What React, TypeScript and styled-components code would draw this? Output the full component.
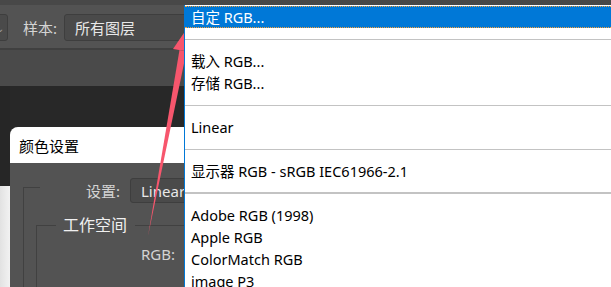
import React from 'react';
import styled, { createGlobalStyle } from 'styled-components';

const GlobalStyle = createGlobalStyle`
  html, body {
    margin: 0;
    padding: 0;
    background: #282828;
    overflow: hidden;
  }
  * {
    box-sizing: border-box;
  }
`;

const uiFont = `"Noto Sans", "Noto Sans CJK SC", sans-serif`;

const Page = styled.div`
  position: relative;
  width: 611px;
  height: 287px;
  overflow: hidden;
  display: flex;
  flex-direction: column;
  font-family: ${uiFont};
`;

const TopStrip = styled.div`
  height: 5px;
  flex-shrink: 0;
  background: #484848;
`;

const Toolbar = styled.div`
  height: 43px;
  flex-shrink: 0;
  background: #535353;
  display: flex;
  align-items: center;
  padding-top: 2px;
`;

const Select = styled.div<{ width: number }>`
  width: ${({ width }) => width}px;
  height: 27px;
  flex-shrink: 0;
  background: #4a4a4a;
  border: 1px solid #3e3e3e;
  border-radius: 3px;
  color: #e8e8e8;
  font-size: 15px;
  display: flex;
  align-items: center;
  padding-left: 10px;
  white-space: nowrap;
  overflow: hidden;
`;

const CutSelect = styled(Select)`
  margin-left: -${({ width }) => width - 8}px;
  justify-content: flex-end;
  padding: 0 3px 0 0;
  color: #9a9a9a;
  font-size: 10px;
`;

const ToolLabel = styled.span`
  color: #d4d4d4;
  font-size: 15px;
  margin: 0 7px 0 15px;
`;

const Divider = styled.div`
  height: 2px;
  flex-shrink: 0;
  background: #404040;
`;

const OptionsBar = styled.div`
  height: 36px;
  flex-shrink: 0;
  background: #4a4a4a;
`;

const Workspace = styled.div`
  flex: 1;
  min-height: 0;
  overflow: hidden;
  display: flex;
  background: #282828;
`;

const Backdrop = styled.div`
  width: 10px;
  flex-shrink: 0;
  display: flex;
  flex-direction: column;
`;

const BackdropPart = styled.div<{ light?: boolean }>`
  height: ${({ light }) => (light ? 'auto' : '100px')};
  flex: ${({ light }) => (light ? 1 : 'none')};
  background: ${({ light }) => (light ? 'linear-gradient(90deg, #e2e2e2, #f2f2f2)' : '#262626')};
`;

const Dialog = styled.div`
  flex: 1;
  margin-top: 41px;
  border-top-left-radius: 8px;
  overflow: hidden;
  background: #535353;
  display: flex;
  flex-direction: column;
`;

const TitleBar = styled.div`
  height: 36px;
  background: #ffffff;
  color: #000;
  font-size: 15px;
  display: flex;
  align-items: center;
  padding-left: 9px;
  flex-shrink: 0;
`;

const DialogBody = styled.div`
  padding: 8px 0 0 13px;
`;

const Group = styled.fieldset<{ inset?: number }>`
  margin: ${({ inset }) => (inset ? `12px 0 0 ${inset}px` : '0')};
  padding: 0;
  border: none;
  border-top: 1px solid #414141;
  border-left: 1px solid #414141;
  min-width: 0;
`;

const SettingsLegend = styled.legend`
  margin-left: 16px;
  padding: 7px 0 0 0;
`;

const GroupTitle = styled.legend`
  margin-left: 19px;
  padding: 0 8px 0 7px;
  color: #f0f0f0;
  font-size: 16px;
  line-height: 20px;
`;

const FieldRow = styled.div<{ labelWidth: number }>`
  display: grid;
  grid-template-columns: ${({ labelWidth }) => labelWidth}px 200px;
  column-gap: 10px;
  align-items: center;
  height: 25px;
  margin-top: ${({ labelWidth }) => (labelWidth < 100 ? 0 : 6)}px;
  & + & {
    margin-top: 12px;
  }
`;

const FieldLabel = styled.span`
  color: #d4d4d4;
  font-size: 15px;
  text-align: right;
  white-space: nowrap;
`;

const FieldSelect = styled(Select)`
  height: 25px;
  font-size: 15px;
`;

const Arrow = styled.svg`
  position: absolute;
  left: 0;
  top: 0;
  pointer-events: none;
`;

const Menu = styled.div`
  position: absolute;
  left: 184px;
  top: 5px;
  right: 0;
  bottom: 0;
  background: #ffffff;
  border-left: 1px solid #0078d7;
  padding-top: 1px;
  font-family: ${uiFont};
  font-size: 14.5px;
  color: #000;
`;

const MenuItem = styled.div<{ active?: boolean }>`
  height: 22px;
  line-height: 20px;
  padding-left: 6px;
  white-space: nowrap;
  background: ${({ active }) => (active ? '#0078d7' : 'transparent')};
  color: ${({ active }) => (active ? '#ffffff' : '#000000')};
  border-top: 1px dotted ${({ active }) => (active ? '#f5a03a' : 'transparent')};
  border-bottom: 1px dotted ${({ active }) => (active ? '#f5a03a' : 'transparent')};
`;

const Separator = styled.div<{ thick?: boolean }>`
  height: 22px;
  display: flex;
  flex-direction: column;
  justify-content: flex-start;
  padding-top: ${({ thick }) => (thick ? 10 : 11)}px;
  &::after {
    content: '';
    display: block;
    height: ${({ thick }) => (thick ? 2 : 1)}px;
    background: #c3c3c3;
  }
`;

type Entry = { label: string; active?: boolean } | { sep: true; thick?: boolean };

const entries: Entry[] = [
  { label: '自定 RGB...', active: true },
  { sep: true },
  { label: '载入 RGB...' },
  { label: '存储 RGB...' },
  { sep: true },
  { label: 'Linear' },
  { sep: true },
  { label: '显示器 RGB - sRGB IEC61966-2.1' },
  { sep: true, thick: true },
  { label: 'Adobe RGB (1998)' },
  { label: 'Apple RGB' },
  { label: 'ColorMatch RGB' },
  { label: 'image P3' },
];

const App: React.FC = () => {
  return (
    <Page>
      <GlobalStyle />
      <TopStrip />
      <Toolbar>
        <CutSelect width={40}>⌄</CutSelect>
        <ToolLabel>样本:</ToolLabel>
        <Select width={150}>所有图层</Select>
      </Toolbar>
      <Divider />
      <OptionsBar />
      <Workspace>
        <Backdrop>
          <BackdropPart />
          <BackdropPart light />
        </Backdrop>
        <Dialog>
          <TitleBar>颜色设置</TitleBar>
          <DialogBody>
            <Group>
              <SettingsLegend>
                <FieldRow labelWidth={80}>
                  <FieldLabel>设置:</FieldLabel>
                  <FieldSelect width={200}>LinearSpace</FieldSelect>
                </FieldRow>
              </SettingsLegend>
              <Group inset={12}>
                <GroupTitle>工作空间</GroupTitle>
                <FieldRow labelWidth={138}>
                  <FieldLabel>RGB:</FieldLabel>
                  <FieldSelect width={200}>Linear</FieldSelect>
                </FieldRow>
                <FieldRow labelWidth={138}>
                  <FieldLabel>CMYK:</FieldLabel>
                  <FieldSelect width={200}>Japan Color 2001 Coated</FieldSelect>
                </FieldRow>
              </Group>
            </Group>
          </DialogBody>
        </Dialog>
      </Workspace>
      <Arrow width="611" height="287" viewBox="0 0 611 287">
        <polygon points="148,236 179.5,50 186.5,51.5" fill="#f7566d" />
        <polygon points="188,27 173,49 197,53" fill="#f7566d" />
      </Arrow>
      <Menu>
        {entries.map((e, i) =>
          'sep' in e ? (
            <Separator key={i} thick={e.thick} />
          ) : (
            <MenuItem key={i} active={e.active}>
              {e.label}
            </MenuItem>
          )
        )}
      </Menu>
    </Page>
  );
};

export default App;
